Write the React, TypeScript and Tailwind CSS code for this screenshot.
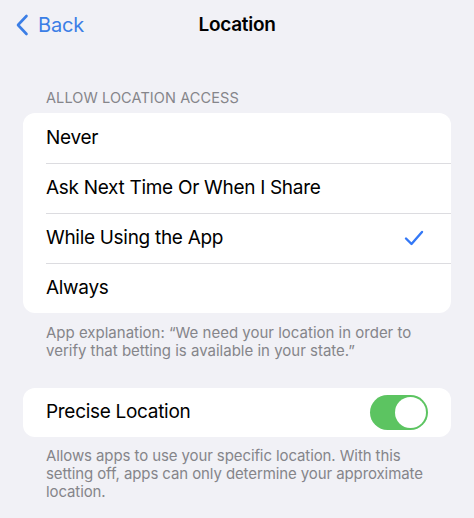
import { useState } from "react";

const OPTIONS = ["Never", "Ask Next Time Or When I Share", "While Using the App", "Always"];

function Chevron() {
  return (
    <svg width="14" height="22" viewBox="0 0 14 22" fill="none">
      <path d="M11.5 2 L3 11 L11.5 20" stroke="#3b7ee6" strokeWidth="2.6" strokeLinecap="round" strokeLinejoin="round" />
    </svg>
  );
}

function Check() {
  return (
    <svg width="20" height="16" viewBox="0 0 20 16" fill="none">
      <path d="M2 8.5 L7.5 14 L18 2" stroke="#3478f6" strokeWidth="2.4" strokeLinecap="round" strokeLinejoin="round" />
    </svg>
  );
}

function Toggle({ on, onChange }: { on: boolean; onChange: () => void }) {
  return (
    <button
      type="button"
      onClick={onChange}
      className={`flex h-[35px] w-[58px] items-center rounded-full p-[2px] ${on ? "justify-end bg-[#5cc461]" : "justify-start bg-[#e3e3e8]"}`}
    >
      <span className="h-[31px] w-[31px] rounded-full bg-white" />
    </button>
  );
}

export default function App() {
  const [selected, setSelected] = useState(2);
  const [precise, setPrecise] = useState(true);

  return (
    <div className="h-[518px] w-[474px] overflow-hidden bg-[#f1f1f6] font-['Inter',sans-serif] text-black">
      {/* nav bar */}
      <div className="relative flex h-[50px] items-center">
        <button type="button" className="flex items-center gap-[9px] pl-[15px] text-[20px] text-[#3b7ee6]">
          <Chevron />
          <span className="tracking-[-0.2px]">Back</span>
        </button>
        <h1 className="absolute left-1/2 -translate-x-1/2 text-[19px] font-semibold tracking-[-0.3px]">Location</h1>
      </div>

      <div className="px-[23px]">
        <p className="mt-[37px] pl-[23px] text-[14.5px] uppercase tracking-[0.1px] text-[#85858a]">Allow Location Access</p>

        <div className="mt-[4px] overflow-hidden rounded-[12px] bg-white">
          {OPTIONS.map((label, i) => (
            <button
              key={label}
              type="button"
              onClick={() => setSelected(i)}
              className="flex h-[50px] w-full items-center pl-[23px] text-left"
            >
              <div className={`flex h-full flex-1 items-center pr-[27px] ${i > 0 ? "border-t border-[#dcdce0]" : ""}`}>
                <span className="flex-1 text-[19px] tracking-[-0.3px]">{label}</span>
                {selected === i && <Check />}
              </div>
            </button>
          ))}
        </div>

        <p className="mt-[11px] pl-[23px] pr-[20px] text-[15px] leading-[18px] text-[#85858a]">
          App explanation: “We need your location in order to verify that betting is available in your state.”
        </p>

        <div className="mt-[28px] flex h-[49px] items-center rounded-[12px] bg-white pl-[23px] pr-[23px]">
          <span className="flex-1 text-[19px] tracking-[-0.3px]">Precise Location</span>
          <Toggle on={precise} onChange={() => setPrecise((v) => !v)} />
        </div>

        <p className="mt-[10px] pl-[23px] pr-[20px] text-[15px] leading-[18px] tracking-[-0.1px] text-[#85858a]">
          Allows apps to use your specific location. With this setting off, apps can only determine your approximate location.
        </p>
      </div>
    </div>
  );
}
